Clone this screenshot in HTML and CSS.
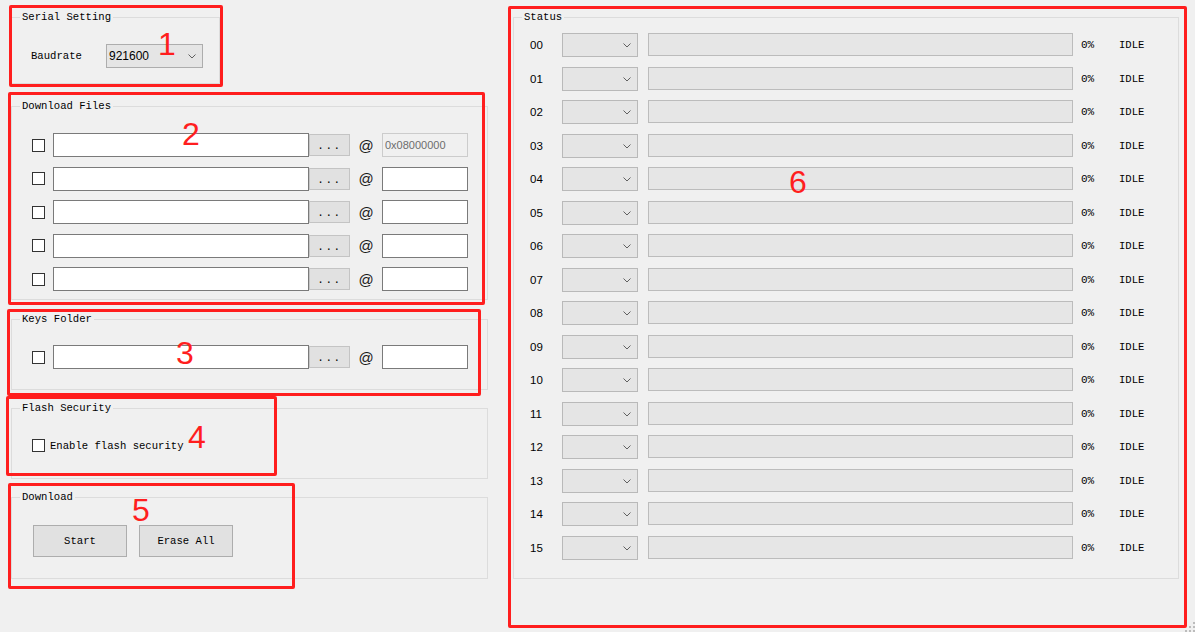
FILE: index.html
```html
<!DOCTYPE html>
<html>
<head>
<title>Downloader</title>
<link rel="stylesheet" href="styles.css">
</head>
<body>

<div class="window">
    <div class="left">
        <div class="group serial">
            <div class="group-title">Serial Setting</div>
            <div class="baud-row">
                <span class="baud-label">Baudrate</span>
                <div class="combo baud-combo">
                    <span>921600</span>
                    <svg class="chevron" width="8" height="5" viewBox="0 0 8 5"><polyline points="0.5,0.5 4,4 7.5,0.5" fill="none" stroke="#606060" stroke-width="1"/></svg>
                </div>
            </div>
        </div>

        <div class="group files">
            <div class="group-title">Download Files</div>
            <div class="file-rows">
                <div class="file-row">
                    <span class="check"></span>
                    <input type="text" class="path">
                    <div class="browse">...</div>
                    <span class="at">@</span>
                    <input type="text" class="addr" value="0x08000000" disabled>
                </div>
                <div class="file-row">
                    <span class="check"></span>
                    <input type="text" class="path">
                    <div class="browse">...</div>
                    <span class="at">@</span>
                    <input type="text" class="addr">
                </div>
                <div class="file-row">
                    <span class="check"></span>
                    <input type="text" class="path">
                    <div class="browse">...</div>
                    <span class="at">@</span>
                    <input type="text" class="addr">
                </div>
                <div class="file-row">
                    <span class="check"></span>
                    <input type="text" class="path">
                    <div class="browse">...</div>
                    <span class="at">@</span>
                    <input type="text" class="addr">
                </div>
                <div class="file-row">
                    <span class="check"></span>
                    <input type="text" class="path">
                    <div class="browse">...</div>
                    <span class="at">@</span>
                    <input type="text" class="addr">
                </div>
            </div>
        </div>

        <div class="group keys">
            <div class="group-title">Keys Folder</div>
            <div class="file-rows keys-rows">
                <div class="file-row">
                    <span class="check"></span>
                    <input type="text" class="path">
                    <div class="browse">...</div>
                    <span class="at">@</span>
                    <input type="text" class="addr">
                </div>
            </div>
        </div>

        <div class="group flash">
            <div class="group-title">Flash Security</div>
            <div class="flash-row">
                <span class="check"></span>
                <span class="flash-label">Enable flash security</span>
            </div>
        </div>

        <div class="group download">
            <div class="group-title">Download</div>
            <div class="download-row">
                <div class="push">Start</div>
                <div class="push">Erase All</div>
            </div>
        </div>
    </div>

    <div class="group status">
        <div class="group-title">Status</div>
        <div class="status-rows">
            <div class="status-row"><span class="port">00</span><div class="combo port-combo"><svg class="chevron" width="8" height="5" viewBox="0 0 8 5"><polyline points="0.5,0.5 4,4 7.5,0.5" fill="none" stroke="#606060"/></svg></div><div class="progress"></div><span class="pct">0%</span><span class="state">IDLE</span></div>
            <div class="status-row"><span class="port">01</span><div class="combo port-combo"><svg class="chevron" width="8" height="5" viewBox="0 0 8 5"><polyline points="0.5,0.5 4,4 7.5,0.5" fill="none" stroke="#606060"/></svg></div><div class="progress"></div><span class="pct">0%</span><span class="state">IDLE</span></div>
            <div class="status-row"><span class="port">02</span><div class="combo port-combo"><svg class="chevron" width="8" height="5" viewBox="0 0 8 5"><polyline points="0.5,0.5 4,4 7.5,0.5" fill="none" stroke="#606060"/></svg></div><div class="progress"></div><span class="pct">0%</span><span class="state">IDLE</span></div>
            <div class="status-row"><span class="port">03</span><div class="combo port-combo"><svg class="chevron" width="8" height="5" viewBox="0 0 8 5"><polyline points="0.5,0.5 4,4 7.5,0.5" fill="none" stroke="#606060"/></svg></div><div class="progress"></div><span class="pct">0%</span><span class="state">IDLE</span></div>
            <div class="status-row"><span class="port">04</span><div class="combo port-combo"><svg class="chevron" width="8" height="5" viewBox="0 0 8 5"><polyline points="0.5,0.5 4,4 7.5,0.5" fill="none" stroke="#606060"/></svg></div><div class="progress"></div><span class="pct">0%</span><span class="state">IDLE</span></div>
            <div class="status-row"><span class="port">05</span><div class="combo port-combo"><svg class="chevron" width="8" height="5" viewBox="0 0 8 5"><polyline points="0.5,0.5 4,4 7.5,0.5" fill="none" stroke="#606060"/></svg></div><div class="progress"></div><span class="pct">0%</span><span class="state">IDLE</span></div>
            <div class="status-row"><span class="port">06</span><div class="combo port-combo"><svg class="chevron" width="8" height="5" viewBox="0 0 8 5"><polyline points="0.5,0.5 4,4 7.5,0.5" fill="none" stroke="#606060"/></svg></div><div class="progress"></div><span class="pct">0%</span><span class="state">IDLE</span></div>
            <div class="status-row"><span class="port">07</span><div class="combo port-combo"><svg class="chevron" width="8" height="5" viewBox="0 0 8 5"><polyline points="0.5,0.5 4,4 7.5,0.5" fill="none" stroke="#606060"/></svg></div><div class="progress"></div><span class="pct">0%</span><span class="state">IDLE</span></div>
            <div class="status-row"><span class="port">08</span><div class="combo port-combo"><svg class="chevron" width="8" height="5" viewBox="0 0 8 5"><polyline points="0.5,0.5 4,4 7.5,0.5" fill="none" stroke="#606060"/></svg></div><div class="progress"></div><span class="pct">0%</span><span class="state">IDLE</span></div>
            <div class="status-row"><span class="port">09</span><div class="combo port-combo"><svg class="chevron" width="8" height="5" viewBox="0 0 8 5"><polyline points="0.5,0.5 4,4 7.5,0.5" fill="none" stroke="#606060"/></svg></div><div class="progress"></div><span class="pct">0%</span><span class="state">IDLE</span></div>
            <div class="status-row"><span class="port">10</span><div class="combo port-combo"><svg class="chevron" width="8" height="5" viewBox="0 0 8 5"><polyline points="0.5,0.5 4,4 7.5,0.5" fill="none" stroke="#606060"/></svg></div><div class="progress"></div><span class="pct">0%</span><span class="state">IDLE</span></div>
            <div class="status-row"><span class="port">11</span><div class="combo port-combo"><svg class="chevron" width="8" height="5" viewBox="0 0 8 5"><polyline points="0.5,0.5 4,4 7.5,0.5" fill="none" stroke="#606060"/></svg></div><div class="progress"></div><span class="pct">0%</span><span class="state">IDLE</span></div>
            <div class="status-row"><span class="port">12</span><div class="combo port-combo"><svg class="chevron" width="8" height="5" viewBox="0 0 8 5"><polyline points="0.5,0.5 4,4 7.5,0.5" fill="none" stroke="#606060"/></svg></div><div class="progress"></div><span class="pct">0%</span><span class="state">IDLE</span></div>
            <div class="status-row"><span class="port">13</span><div class="combo port-combo"><svg class="chevron" width="8" height="5" viewBox="0 0 8 5"><polyline points="0.5,0.5 4,4 7.5,0.5" fill="none" stroke="#606060"/></svg></div><div class="progress"></div><span class="pct">0%</span><span class="state">IDLE</span></div>
            <div class="status-row"><span class="port">14</span><div class="combo port-combo"><svg class="chevron" width="8" height="5" viewBox="0 0 8 5"><polyline points="0.5,0.5 4,4 7.5,0.5" fill="none" stroke="#606060"/></svg></div><div class="progress"></div><span class="pct">0%</span><span class="state">IDLE</span></div>
            <div class="status-row"><span class="port">15</span><div class="combo port-combo"><svg class="chevron" width="8" height="5" viewBox="0 0 8 5"><polyline points="0.5,0.5 4,4 7.5,0.5" fill="none" stroke="#606060"/></svg></div><div class="progress"></div><span class="pct">0%</span><span class="state">IDLE</span></div>
        </div>
    </div>
</div>

<!-- red annotation marks drawn over the window -->
<div class="mark mark-1"></div>
<div class="mark mark-2"></div>
<div class="mark mark-3"></div>
<div class="mark mark-4"></div>
<div class="mark mark-5"></div>
<div class="mark mark-6"></div>
<span class="mark-num num-1">1</span>
<span class="mark-num num-2">2</span>
<span class="mark-num num-3">3</span>
<span class="mark-num num-4">4</span>
<span class="mark-num num-5">5</span>
<span class="mark-num num-6">6</span>

<svg class="grip" width="10" height="10" viewBox="0 0 10 10">
    <rect x="8" y="0" width="2" height="2" fill="#bcbcbc"/>
    <rect x="4" y="4" width="2" height="2" fill="#bcbcbc"/>
    <rect x="8" y="4" width="2" height="2" fill="#bcbcbc"/>
    <rect x="0" y="8" width="2" height="2" fill="#bcbcbc"/>
    <rect x="4" y="8" width="2" height="2" fill="#bcbcbc"/>
    <rect x="8" y="8" width="2" height="2" fill="#bcbcbc"/>
</svg>

</body>
</html>
```

FILE: styles.css
```css
body {
    margin: 0;
    background: #f0f0f0;
    font-family: "Liberation Mono", monospace;
    font-size: 10.6px;
    color: #000;
    width: 1195px;
    height: 632px;
    overflow: hidden;
    position: relative;
}
.window {
    display: flex;
    align-items: flex-start;
    padding: 17px 0 0 11px;
    gap: 25px;
}
.left {
    width: 477px;
    display: flex;
    flex-direction: column;
}
.group {
    box-sizing: border-box;
    border: 1px solid #dcdcdc;
}
.group-title {
    width: fit-content;
    margin: -8px 0 0 8px;
    padding: 0 2px;
    line-height: 14px;
    background: #f0f0f0;
}

/* serial */
.serial {
    width: 209px;
    height: 67px;
}
.baud-row {
    display: flex;
    align-items: center;
    margin-top: 20px;
    padding-left: 19px;
}
.baud-label {
    width: 75px;
}
.combo {
    box-sizing: border-box;
    position: relative;
    height: 24px;
    background: #e5e5e5;
    border: 1px solid #adadad;
    font-family: "Liberation Sans", sans-serif;
    font-size: 12px;
    line-height: 22px;
}
.baud-combo {
    width: 97px;
    padding-left: 2px;
}
.chevron {
    position: absolute;
    right: 6px;
    top: 9px;
}

/* file rows */
.files {
    height: 194px;
    margin-top: 22px;
}
.file-rows {
    display: flex;
    flex-direction: column;
    gap: 9.5px;
    margin-top: 20px;
    padding-left: 20px;
}
.keys-rows {
    margin-top: 19px;
}
.file-row {
    display: flex;
    align-items: center;
    height: 24px;
}
.check {
    box-sizing: border-box;
    width: 13px;
    height: 13px;
    border: 1px solid #333;
    background: #fff;
    margin-right: 8px;
}
.path {
    box-sizing: border-box;
    width: 256px;
    height: 24px;
    margin: 0;
    border: 1px solid #7a7a7a;
    background: #fff;
    padding: 0 3px;
}
.browse {
    box-sizing: border-box;
    width: 41px;
    height: 22px;
    background: #e1e1e1;
    border: 1px solid #c4c4c4;
    text-align: center;
    font-size: 11px;
    letter-spacing: 1.5px;
    line-height: 22px;
}
.at {
    width: 32px;
    text-align: center;
    font-family: "Liberation Sans", sans-serif;
    font-size: 15px;
    color: #1a1a1a;
}
.addr {
    box-sizing: border-box;
    width: 86px;
    height: 24px;
    margin: 0;
    border: 1px solid #7a7a7a;
    background: #fff;
    padding: 0 2px;
    font-family: "Liberation Sans", sans-serif;
    font-size: 11px;
}
.addr:disabled {
    background: #f0f0f0;
    border-color: #cccccc;
    color: #6d6d6d;
}

.keys {
    height: 71px;
    margin-top: 19px;
}

/* flash security */
.flash {
    height: 71px;
    margin-top: 18px;
}
.flash-row {
    display: flex;
    align-items: center;
    height: 13px;
    margin-top: 24px;
    padding-left: 20px;
}
.flash-row .check {
    margin-right: 5px;
}

/* download */
.download {
    height: 82px;
    margin-top: 18px;
}
.download-row {
    display: flex;
    gap: 12px;
    margin-top: 21px;
    padding-left: 21px;
}
.push {
    box-sizing: border-box;
    width: 94px;
    height: 32px;
    background: #e1e1e1;
    border: 1px solid #adadad;
    text-align: center;
    line-height: 30px;
}

/* status */
.status {
    width: 666px;
    height: 562px;
}
.status-rows {
    display: flex;
    flex-direction: column;
    gap: 9.53px;
    margin-top: 9px;
    padding-left: 16px;
}
.status-row {
    display: flex;
    align-items: flex-start;
    height: 24px;
    line-height: 24px;
}
.port {
    width: 32px;
    font-family: "Liberation Sans", sans-serif;
    font-size: 11.5px;
}
.port-combo {
    width: 76px;
    border-color: #b9b9b9;
}
.progress {
    box-sizing: border-box;
    width: 425px;
    height: 23px;
    margin-left: 10px;
    background: #e6e6e6;
    border: 1px solid #bcbcbc;
}
.pct {
    width: 38px;
    margin-left: 8px;
    font-size: 11px;
}
.state {
    font-size: 10.6px;
}

/* annotation overlay */
.mark {
    position: absolute;
    box-sizing: border-box;
    border: 3px solid #ff1e1e;
    border-radius: 2px;
}
.mark-1 { left: 9px; top: 5px; width: 214px; height: 82px; }
.mark-2 { left: 8px; top: 92px; width: 477px; height: 213px; }
.mark-3 { left: 7px; top: 309px; width: 474px; height: 87px; }
.mark-4 { left: 6px; top: 396px; width: 271px; height: 80px; }
.mark-5 { left: 8px; top: 483px; width: 287px; height: 106px; }
.mark-6 { left: 508px; top: 6px; width: 679px; height: 622px; }
.mark-num {
    position: absolute;
    font-family: "Liberation Sans", sans-serif;
    font-size: 32px;
    line-height: 1;
    color: #ff1e1e;
}
.num-1 { left: 158px; top: 28px; }
.num-2 { left: 182px; top: 118px; }
.num-3 { left: 176px; top: 337px; }
.num-4 { left: 188px; top: 421px; }
.num-5 { left: 132px; top: 494px; }
.num-6 { left: 789px; top: 166px; }
.grip {
    position: absolute;
    right: 0;
    bottom: 0;
}
```
